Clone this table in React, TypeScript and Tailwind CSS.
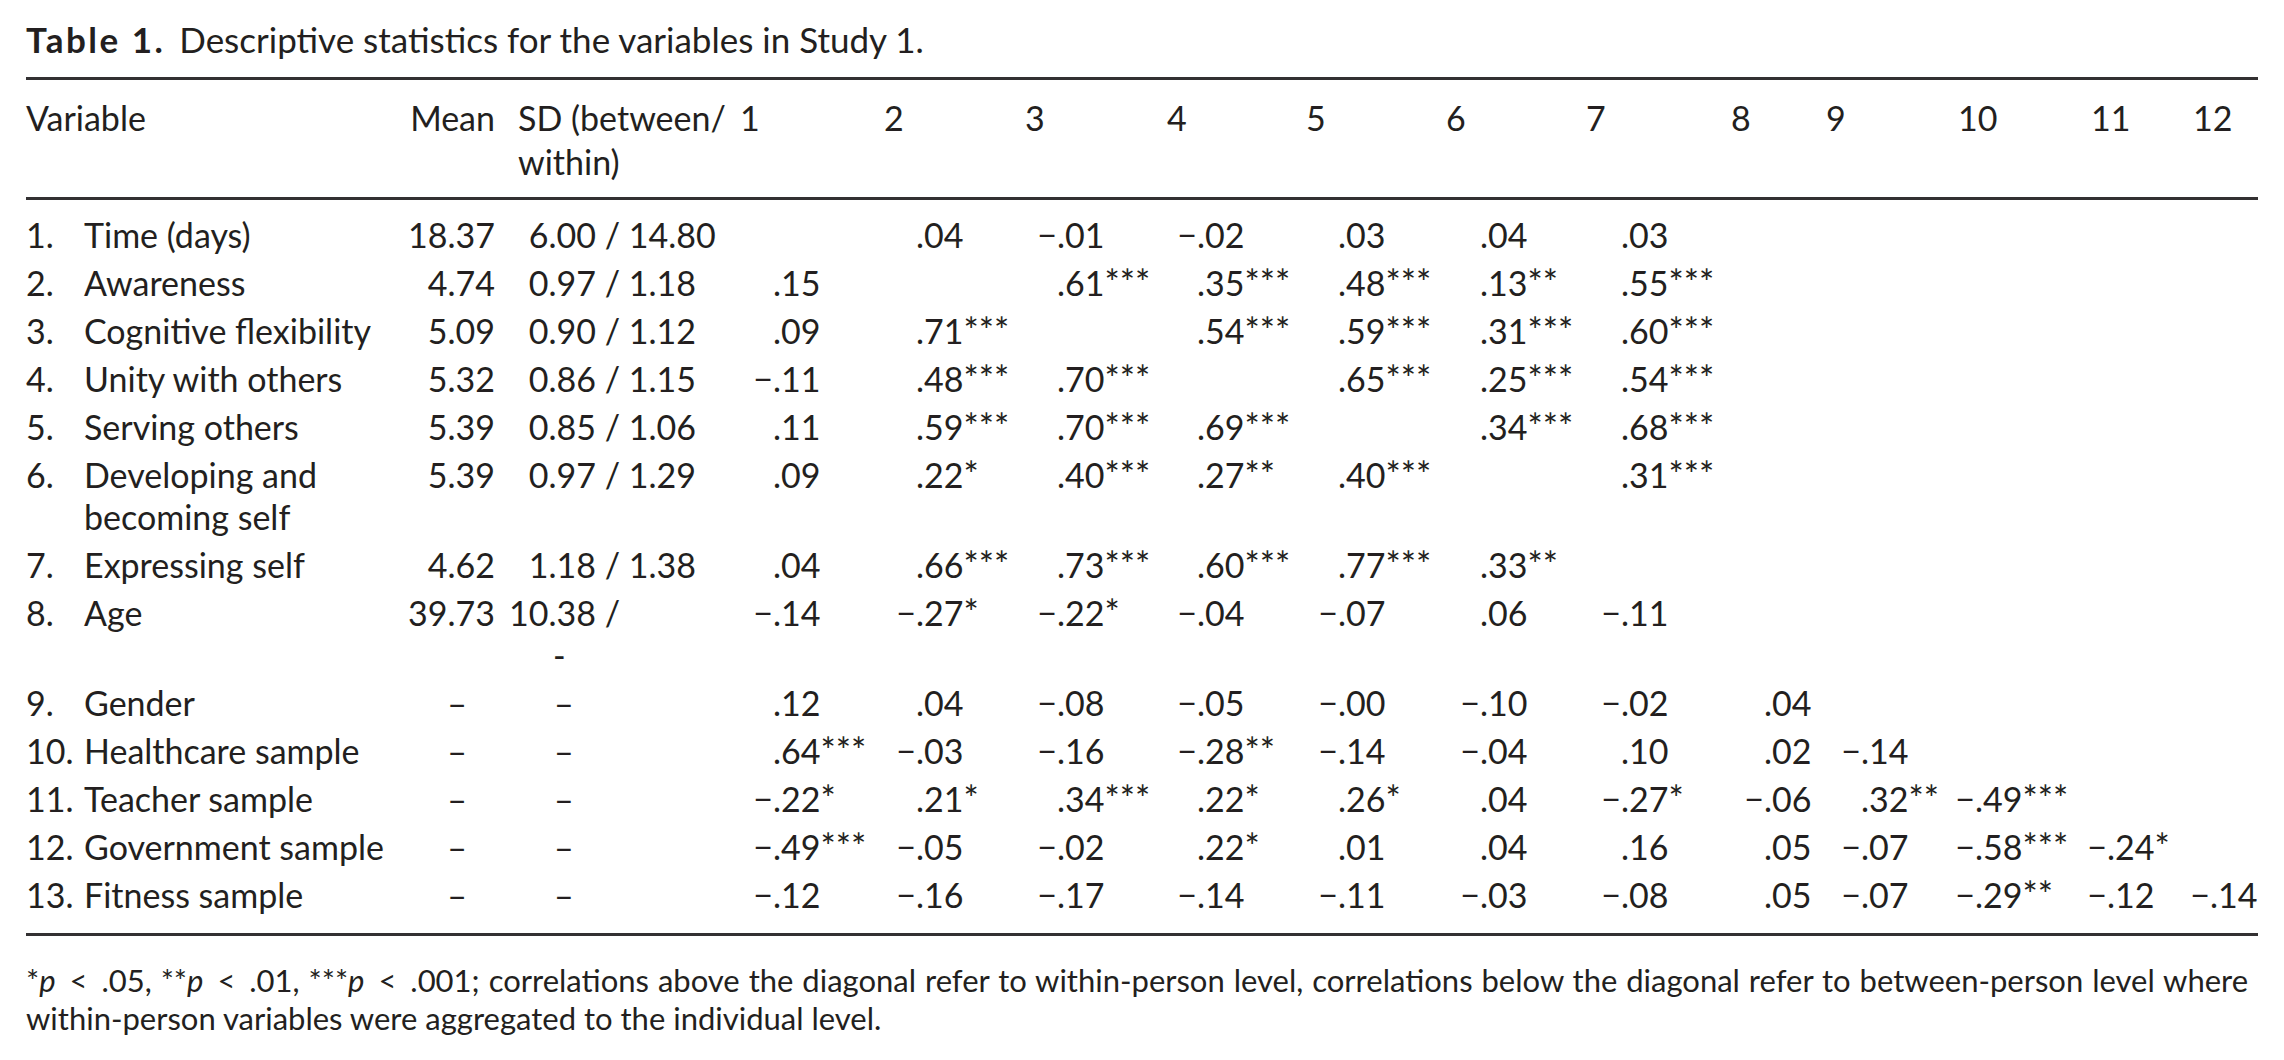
import React from 'react';

const GRID =
  'grid grid-cols-[58px_321px_90px_256px_143px_141px_140px_141px_142px_141px_143px_97px_114px_132px_103px_70px]';

const HEAD_OFF = [
  '-ml-[11px]',
  '-ml-[10px]',
  '-ml-[10px]',
  '-ml-[8px]',
  '-ml-[10px]',
  '-ml-[12px]',
  '-ml-[13px]',
  '-ml-[11px]',
  '-ml-[13px]',
  'ml-[5px]',
  'ml-[6px]',
  'ml-[5px]',
];

type Row = {
  n: string;
  name: string[];
  mean: string;
  sd: [string, string] | null;
  sdExtra?: boolean;
  c: string[];
};

const ROWS: Row[] = [
  { n: '1.', name: ['Time (days)'], mean: '18.37', sd: ['6.00', '14.80'], c: ['', '.04', '−.01', '−.02', '.03', '.04', '.03'] },
  { n: '2.', name: ['Awareness'], mean: '4.74', sd: ['0.97', '1.18'], c: ['.15', '', '.61***', '.35***', '.48***', '.13**', '.55***'] },
  { n: '3.', name: ['Cognitive flexibility'], mean: '5.09', sd: ['0.90', '1.12'], c: ['.09', '.71***', '', '.54***', '.59***', '.31***', '.60***'] },
  { n: '4.', name: ['Unity with others'], mean: '5.32', sd: ['0.86', '1.15'], c: ['−.11', '.48***', '.70***', '', '.65***', '.25***', '.54***'] },
  { n: '5.', name: ['Serving others'], mean: '5.39', sd: ['0.85', '1.06'], c: ['.11', '.59***', '.70***', '.69***', '', '.34***', '.68***'] },
  { n: '6.', name: ['Developing and', 'becoming self'], mean: '5.39', sd: ['0.97', '1.29'], c: ['.09', '.22*', '.40***', '.27**', '.40***', '', '.31***'] },
  { n: '7.', name: ['Expressing self'], mean: '4.62', sd: ['1.18', '1.38'], c: ['.04', '.66***', '.73***', '.60***', '.77***', '.33**', ''] },
  { n: '8.', name: ['Age'], mean: '39.73', sd: ['10.38', ''], sdExtra: true, c: ['−.14', '−.27*', '−.22*', '−.04', '−.07', '.06', '−.11'] },
  { n: '9.', name: ['Gender'], mean: '–', sd: null, c: ['.12', '.04', '−.08', '−.05', '−.00', '−.10', '−.02', '.04'] },
  { n: '10.', name: ['Healthcare sample'], mean: '–', sd: null, c: ['.64***', '−.03', '−.16', '−.28**', '−.14', '−.04', '.10', '.02', '−.14'] },
  { n: '11.', name: ['Teacher sample'], mean: '–', sd: null, c: ['−.22*', '.21*', '.34***', '.22*', '.26*', '.04', '−.27*', '−.06', '.32**', '−.49***'] },
  { n: '12.', name: ['Government sample'], mean: '–', sd: null, c: ['−.49***', '−.05', '−.02', '.22*', '.01', '.04', '.16', '.05', '−.07', '−.58***', '−.24*'] },
  { n: '13.', name: ['Fitness sample'], mean: '–', sd: null, c: ['−.12', '−.16', '−.17', '−.14', '−.11', '−.03', '−.08', '.05', '−.07', '−.29**', '−.12', '−.14'] },
];

function Corr({ v }: { v: string }) {
  if (!v) return <div />;
  const neg = v.startsWith('−');
  const rest = neg ? v.slice(1) : v;
  const m = rest.match(/^([^*]*)(\**)$/);
  const num = m ? m[1] : rest;
  const stars = m ? m[2] : '';
  return (
    <div className="whitespace-nowrap">
      <span className="inline-block w-[22px] text-right">{neg ? '−' : ''}</span>
      <span>{num}</span>
      {stars && <span className="text-[36px] leading-[0]">{stars}</span>}
    </div>
  );
}

function DataRow({ r }: { r: Row }) {
  const cells = Array.from({ length: 12 }, (_, i) => r.c[i] ?? '');
  return (
    <div className={`${GRID} py-[3px]`}>
      <div className="whitespace-nowrap">{r.n}</div>
      <div className="whitespace-nowrap">
        {r.name.map((t, i) => (
          <div key={i}>{t}</div>
        ))}
      </div>
      <div className={r.sd ? 'text-right' : 'text-right pr-[28px]'}>{r.mean}</div>
      <div className="whitespace-nowrap">
        {r.sd ? (
          <>
            <div className="flex">
              <span className="inline-block w-[101px] text-right">{r.sd[0]}</span>
              <span className="whitespace-pre">{r.sd[1] ? ' / ' + r.sd[1] : ' /'}</span>
            </div>
            {r.sdExtra && <div className="pl-[58px]">-</div>}
          </>
        ) : (
          <div className="pl-[59px]">–</div>
        )}
      </div>
      {cells.map((v, i) => (
        <Corr key={i} v={v} />
      ))}
    </div>
  );
}

function Lt() {
  return <span className="mx-[5px]">&lt;</span>;
}

export default function App() {
  return (
    <div className="w-[2284px] h-[1060px] overflow-hidden bg-white text-[#231f20] font-['Lato',sans-serif]">
      <div className="px-[26px]">
        <div className="pt-[17px] text-[35px] leading-[44px] whitespace-nowrap">
          <span className="font-bold tracking-[2.5px]">Table 1.</span>
          <span className="ml-[14px]">Descriptive statistics for the variables in Study 1.</span>
        </div>
        <div className="mt-[16px] h-[3px] bg-[#333132]" />
        <div className={`${GRID} pt-[16px] pb-[13px] text-[34px] leading-[44px]`}>
          <div className="col-span-2">Variable</div>
          <div className="text-right">Mean</div>
          <div className="pl-[23px] whitespace-nowrap">
            SD (between/
            <br />
            within)
          </div>
          {Array.from({ length: 12 }, (_, i) => (
            <div key={i}>
              <span className={`inline-block ${HEAD_OFF[i]}`}>{i + 1}</span>
            </div>
          ))}
        </div>
        <div className="h-[3px] bg-[#333132]" />
        <div className="pt-[11px] text-[34px] leading-[42px]">
          {ROWS.map((r) => (
            <DataRow key={r.n} r={r} />
          ))}
        </div>
        <div className="mt-[14px] h-[3px] bg-[#333132]" />
        <div className="mt-[25px] text-[31px] leading-[38px] whitespace-nowrap">
          <div className="[word-spacing:1px]">
            *<i>p</i> <Lt /> .05, **<i>p</i> <Lt /> .01, ***<i>p</i> <Lt /> .001; correlations above the diagonal refer
            to within-person level, correlations below the diagonal refer to between-person level where
          </div>
          <div>within-person variables were aggregated to the individual level.</div>
        </div>
      </div>
    </div>
  );
}
